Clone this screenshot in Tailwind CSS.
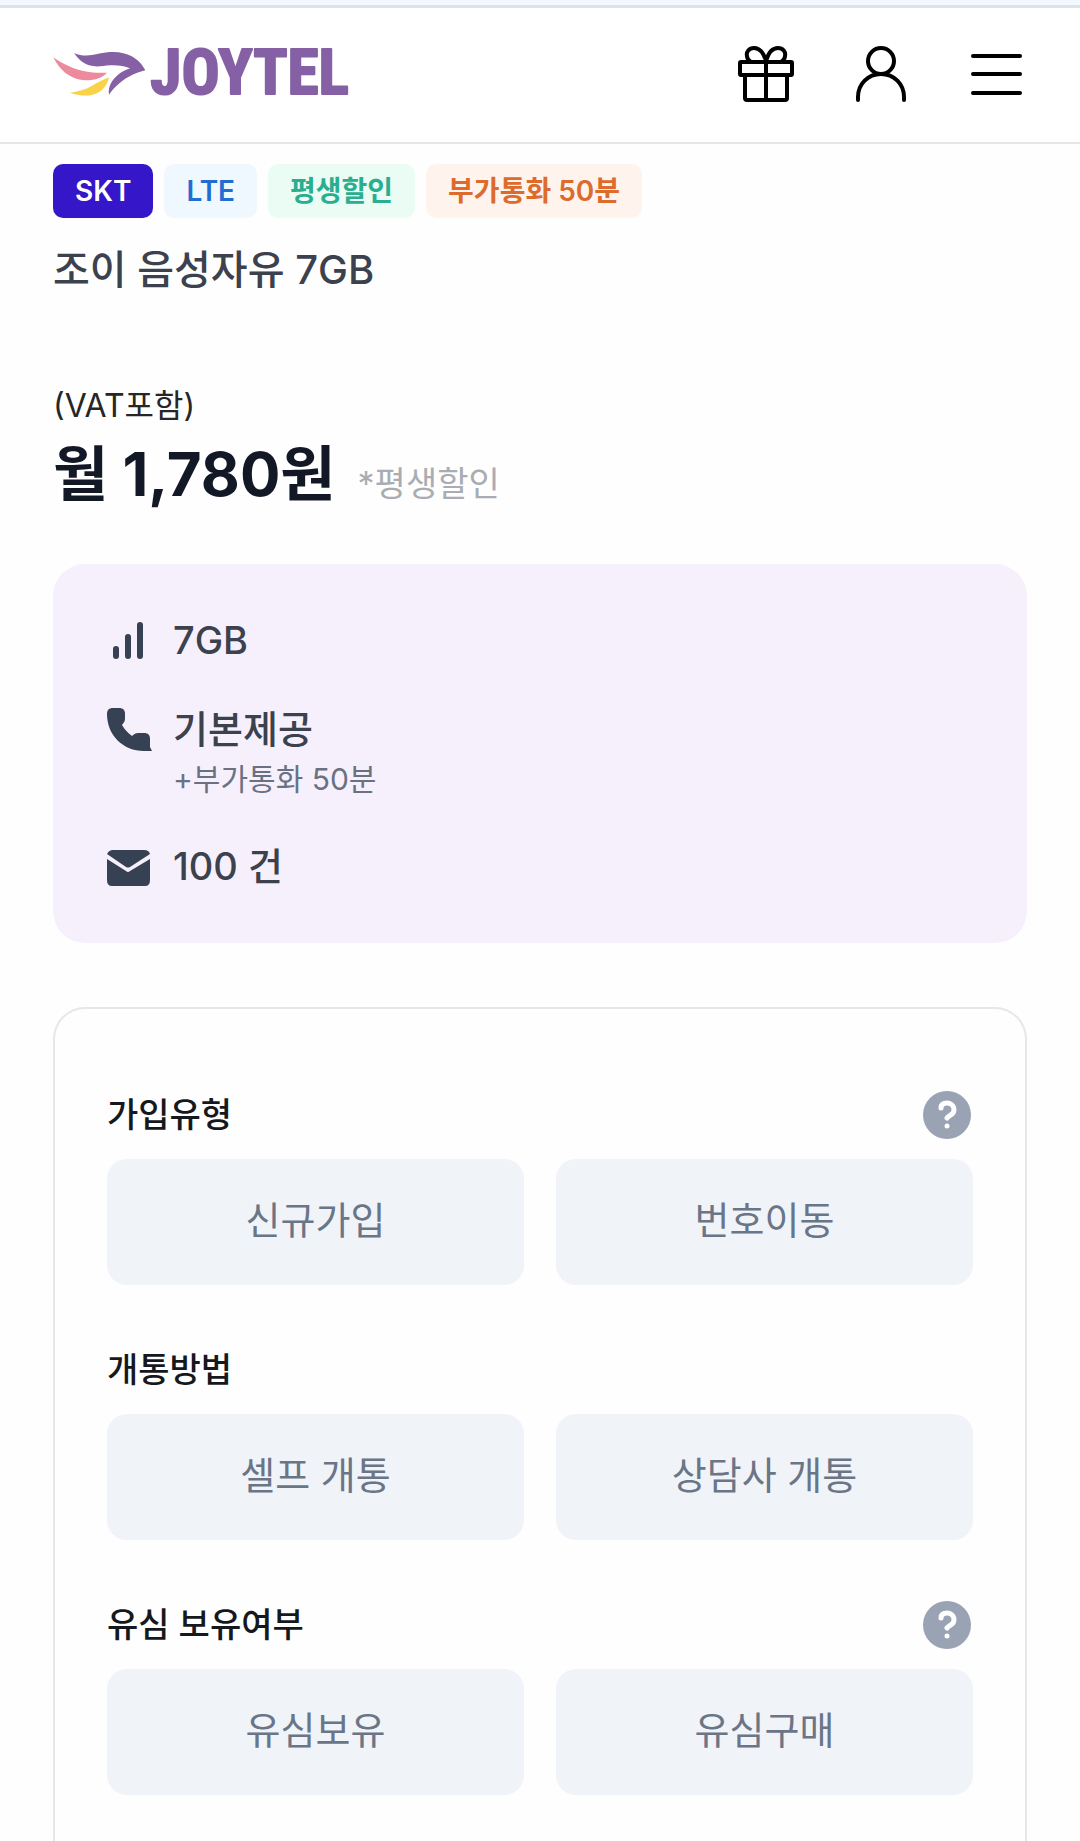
<!DOCTYPE html>
<html lang="ko">
<head>
    <meta charset="UTF-8">
    <meta name="viewport" content="width=device-width, initial-scale=1.0">
    <title>JOYTEL - 조이 음성자유 7GB</title>
    <script src="https://cdn.jsdelivr.net/npm/@tailwindcss/browser@4"></script>
    <style>
        body {
            font-family: Inter, 'Noto Sans CJK KR', sans-serif;
        }
    </style>
</head>
<body class="min-h-screen flex flex-col bg-[#fefefe] text-[#15181d]">
    <div class="h-2 bg-[#f3f8ff] border-b-3 border-[#dde3ec]"></div>
    <header class="h-[136px] px-[53px] pb-[2px] flex items-center justify-between bg-white border-b-2 border-[#e5e6e8]">
        <a href="#" aria-label="JOYTEL">
            <svg class="w-[320px] h-[80px]" viewBox="68 103 960 240">
                <path fill="#8560a4" d="M131 160C160 173 184 167 212 161C250 153 281 157 304 170C324 181 336 195 345 212C318 219 291 231 268 250C254 262 244 273 236 285C233 266 240 249 253 235C266 221 281 212 299 206C283 199 262 196 240 197C216 199 197 203 176 197C155 190 142 175 131 160Z"/>
                <path fill="#ee8a9e" d="M69 173C98 194 127 207 163 215C188 220 209 220 230 219C219 233 193 243 162 242C119 239 87 211 69 173Z"/>
                <path fill="#fad24a" d="M236 233C231 260 212 281 184 286C162 290 140 286 119 279C143 276 165 270 184 259C203 248 219 239 236 233Z"/>
                <text x="360" y="284" font-family="'Roboto Condensed', Roboto, sans-serif" font-weight="700" font-size="190" fill="#8560a4" stroke="#8560a4" stroke-width="6" stroke-linejoin="round">JOYTEL</text>
            </svg>
        </a>
        <nav class="flex items-center gap-[62px] pr-[3px]">
            <button type="button" aria-label="이벤트">
                <svg class="w-[56px] h-[56px]" viewBox="0 0 56 56" fill="none" stroke="#000" stroke-width="4" stroke-linejoin="round" stroke-linecap="round">
                    <rect x="2" y="16" width="52" height="13" rx="1"/>
                    <path d="M7 29v23a2 2 0 0 0 2 2h38a2 2 0 0 0 2-2V29M28 16v38"/>
                    <path d="M28 15C26 8 22 2 16 2c-5 0-8 4-7 8 0 3 2 5 4 6M28 15C30 8 34 2 40 2c5 0 8 4 7 8 0 3-2 5-4 6"/>
                </svg>
            </button>
            <button type="button" aria-label="마이페이지">
                <svg class="w-[50px] h-[56px]" viewBox="0 0 50 56" fill="none" stroke="#000" stroke-width="4" stroke-linecap="round">
                    <circle cx="25" cy="15" r="13"/>
                    <path d="M2 54V51C2 38 12 28 25 28s23 10 23 23v3"/>
                </svg>
            </button>
            <button type="button" aria-label="메뉴">
                <svg class="w-[56px] h-[56px]" viewBox="0 0 56 56" stroke="#000" stroke-width="4" stroke-linecap="round">
                    <path d="M5 10h47M5 28h47M5 47h47"/>
                </svg>
            </button>
        </nav>
    </header>

    <main class="flex-1 flex flex-col px-[53px] pt-5">
        <div class="flex gap-[11px] text-[28px] leading-[54px] font-semibold">
            <span class="px-[22px] rounded-[10px] bg-[#3516c9] text-white">SKT</span>
            <span class="px-[22px] rounded-[10px] bg-[#eff7ff] text-[#216dd0]">LTE</span>
            <span class="px-[22px] rounded-[10px] bg-[#ebfcf4] text-[#2aae90]">평생할인</span>
            <span class="px-[22px] rounded-[10px] bg-[#fff4ed] text-[#dc6b2c]">부가통화 50분</span>
        </div>
        <h1 class="mt-[26px] text-[40px] leading-[52px] font-medium text-[#3b424d]">조이 음성자유 7GB</h1>

        <p class="mt-[90px] text-[32px] leading-10 text-neutral-800">(VAT포함)</p>
        <div class="mt-2 flex items-baseline gap-[22px]">
            <strong class="text-[60px] leading-20 font-bold text-[#121826]">월 1,780원</strong>
            <span class="text-[34px] leading-10 text-[#a9adb3]">*평생할인</span>
        </div>

        <ul class="mt-[50px] pt-[52px] pb-[53px] px-[53px] flex flex-col gap-[41px] rounded-[32px] bg-[#f6f0fd] text-[38px] leading-12 font-medium text-[#3b414d]">
            <li class="flex gap-[21px]">
                <svg class="w-[46px] h-12 text-gray-700" viewBox="0 0 46 48" stroke="currentColor" stroke-width="6" stroke-linecap="round">
                    <path d="M10 33v7M22 21v19M34 9v31"/>
                </svg>
                <span>7GB</span>
            </li>
            <li class="flex gap-[21px]">
                <svg class="w-[46px] h-12 text-gray-700" viewBox="0 0 46 48" fill="currentColor">
                    <path d="M1 9C1 5 3 3 7 3h6c4 0 6 2 6 6v5c0 3-2 4-3 6 3 5 6 8 10 11 2-2 4-3 6-3h6c4 0 6 2 6 6v8l2 4H38C17 46 1 30 1 9Z"/>
                </svg>
                <div>
                    <p>기본제공</p>
                    <p class="mt-1 text-[30px] leading-11 font-normal text-gray-500">+부가통화 50분</p>
                </div>
            </li>
            <li class="flex gap-[21px]">
                <svg class="w-[46px] h-12 text-gray-700" viewBox="0 0 46 48" fill="currentColor">
                    <path d="M1 12Q3 8 7 8h31q5 0 6 4L24 25q-2 1-4 0Z"/>
                    <path d="M1 17l19 12q2 2 4 0l20-12v21q0 6-5 6H6q-5 0-5-6Z"/>
                </svg>
                <span>100 건</span>
            </li>
        </ul>

        <form class="mt-16 flex-1 px-[52px] pt-[82px] flex flex-col gap-[61px] border-2 border-b-0 border-gray-200 rounded-t-[32px]">
            <section>
                <div class="h-12 flex items-center justify-between">
                    <h2 class="text-[34px] leading-12 font-medium">가입유형</h2>
                    <button type="button" aria-label="가입유형 도움말" class="pr-[2px]">
                        <svg class="w-12 h-12" viewBox="0 0 48 48" fill="none">
                            <circle cx="24" cy="24" r="24" fill="#9aa3b4"/>
                            <path d="M18 17c0-4 3-5 6-5s7 2 7 7c0 5-5 5-7 8" stroke="#fff" stroke-width="5" stroke-linecap="round"/>
                            <circle cx="24" cy="35" r="2.500" fill="#fff"/>
                        </svg>
                    </button>
                </div>
                <div class="mt-5 grid grid-cols-2 gap-8 text-[38px] text-[#6a7587]">
                    <button type="button" class="h-[126px] pb-1 rounded-[20px] bg-[#f0f3f8]">신규가입</button>
                    <button type="button" class="h-[126px] pb-1 rounded-[20px] bg-[#f0f3f8]">번호이동</button>
                </div>
            </section>
            <section>
                <div class="h-12 flex items-center justify-between">
                    <h2 class="text-[34px] leading-12 font-medium">개통방법</h2>
                </div>
                <div class="mt-5 grid grid-cols-2 gap-8 text-[38px] text-[#6a7587]">
                    <button type="button" class="h-[126px] pb-1 rounded-[20px] bg-[#f0f3f8]">셀프 개통</button>
                    <button type="button" class="h-[126px] pb-1 rounded-[20px] bg-[#f0f3f8]">상담사 개통</button>
                </div>
            </section>
            <section>
                <div class="h-12 flex items-center justify-between">
                    <h2 class="text-[34px] leading-12 font-medium">유심 보유여부</h2>
                    <button type="button" aria-label="유심 보유여부 도움말" class="pr-[2px]">
                        <svg class="w-12 h-12" viewBox="0 0 48 48" fill="none">
                            <circle cx="24" cy="24" r="24" fill="#9aa3b4"/>
                            <path d="M18 17c0-4 3-5 6-5s7 2 7 7c0 5-5 5-7 8" stroke="#fff" stroke-width="5" stroke-linecap="round"/>
                            <circle cx="24" cy="35" r="2.500" fill="#fff"/>
                        </svg>
                    </button>
                </div>
                <div class="mt-5 grid grid-cols-2 gap-8 text-[38px] text-[#6a7587]">
                    <button type="button" class="h-[126px] pb-1 rounded-[20px] bg-[#f0f3f8]">유심보유</button>
                    <button type="button" class="h-[126px] pb-1 rounded-[20px] bg-[#f0f3f8]">유심구매</button>
                </div>
            </section>
        </form>
    </main>
</body>
</html>
